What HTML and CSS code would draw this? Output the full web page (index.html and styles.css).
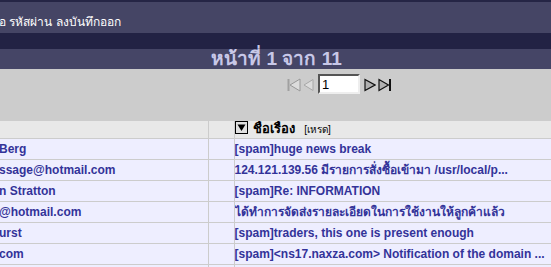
FILE: index.html
```html
<!DOCTYPE html>
<html lang="th">
<head>
  <meta charset="UTF-8">
  <title>กล่องจดหมาย</title>
  <link rel="stylesheet" href="styles.css">
</head>
<body>
  <!-- top menu -->
  <div class="topbar">
    <div class="menu">อ รหัสผ่าน ลงบันทึกออก</div>
  </div>
  <div class="band"></div>

  <div class="title">หน้าที่ 1 จาก 11</div>

  <!-- pager -->
  <div class="toolbar">
    <div class="pager">
      <svg class="pg" width="14" height="14" viewBox="0 0 14 14">
        <rect x="0.5" y="1" width="2" height="12" fill="#a0a0a0"/>
        <polygon points="13,1 13,13 3,7" fill="#dcdcdc" stroke="#989898" stroke-width="1"/>
      </svg>
      <svg class="pg" width="11" height="14" viewBox="0 0 11 14">
        <polygon points="10,1.5 10,12.5 1,7" fill="#dcdcdc" stroke="#a8a8a8" stroke-width="1"/>
      </svg>
      <input class="pageno" type="text" value="1">
      <svg class="pg" width="12" height="14" viewBox="0 0 12 14">
        <polygon points="1,1.5 1,12.5 11,7" fill="#b0b0b0" stroke="#111" stroke-width="1.2"/>
      </svg>
      <svg class="pg" width="14" height="14" viewBox="0 0 14 14">
        <polygon points="1,1.5 1,12.5 10.5,7" fill="#b0b0b0" stroke="#111" stroke-width="1.2"/>
        <rect x="11" y="1" width="2" height="12" fill="#111"/>
      </svg>
    </div>
  </div>

  <table class="list">
    <tr class="head">
      <td class="from"></td>
      <td class="flag"></td>
      <td class="subj">
        <span class="sort"><svg width="13" height="13" viewBox="0 0 13 13"><rect x="0.5" y="0.5" width="12" height="12" fill="#e0e0e0" stroke="#000"/><polygon points="2.5,3.5 10.5,3.5 6.5,10" fill="#000"/></svg></span>
        <b>ชื่อเรื่อง</b> <small>[เหรด]</small>
      </td>
    </tr>
    <tr>
      <td class="from"><a>Berg</a></td>
      <td class="flag"></td>
      <td class="subj"><a>[spam]huge news break</a></td>
    </tr>
    <tr>
      <td class="from"><a>ssage@hotmail.com</a></td>
      <td class="flag"></td>
      <td class="subj"><a>124.121.139.56 มีรายการสั่งซื้อเข้ามา /usr/local/p...</a></td>
    </tr>
    <tr>
      <td class="from"><a>n Stratton</a></td>
      <td class="flag"></td>
      <td class="subj"><a>[spam]Re: INFORMATION</a></td>
    </tr>
    <tr>
      <td class="from"><a>@hotmail.com</a></td>
      <td class="flag"></td>
      <td class="subj"><a>ได้ทำการจัดส่งรายละเอียดในการใช้งานให้ลูกค้าแล้ว</a></td>
    </tr>
    <tr>
      <td class="from"><a>urst</a></td>
      <td class="flag"></td>
      <td class="subj"><a>[spam]traders, this one is present enough</a></td>
    </tr>
    <tr>
      <td class="from"><a>com</a></td>
      <td class="flag"></td>
      <td class="subj"><a>[spam]&lt;ns17.naxza.com&gt; Notification of the domain ...</a></td>
    </tr>
    <tr>
      <td class="from"></td>
      <td class="flag"></td>
      <td class="subj"></td>
    </tr>
  </table>
</body>
</html>
```

FILE: styles.css
```css
/* base */
* { margin:0; padding:0; box-sizing:border-box; }
html, body { overflow:hidden; }
body {
  width:551px; height:267px;
  background:#eeeeff;
  font-family:"Liberation Sans", Tahoma, sans-serif;
  font-size:12px;
}

/* top menu */
.topbar {
  height:33px;
  border-top:2px solid #252545;
  background:#454565;
  padding-top:13px;
}
.menu {
  color:#fff;
  font-size:12px;
  line-height:14px;
  margin-left:-1px;
  white-space:nowrap;
}
.band { height:16px; background:#222244; }

/* page title */
.title {
  height:20px;
  background:#454566;
  color:#c8c8e8;
  font-weight:bold;
  font-size:19px;
  line-height:20px;
  text-align:center;
  padding-left:2px;
  white-space:nowrap;
}

/* pager */
.toolbar {
  height:52px;
  background:#cccccc;
  padding:5px 0 0 287px;
}
.pager { display:flex; align-items:center; height:20px; }
.pg { display:block; margin-top:2px; }
.pg + .pg { margin-left:2px; }
.pageno {
  width:42px; height:20px;
  margin:0 4px 0 4px;
  border:2px solid;
  border-color:#555 #eee #eee #555;
  background:#fff;
  font-family:"Liberation Sans", sans-serif;
  font-size:13px;
  padding:0 2px;
}

/* message list */
.list {
  border-collapse:collapse;
  width:100%;
  table-layout:fixed;
}
.list td {
  height:21px;
  line-height:14px;
  border-bottom:1px solid #cccccc;
  border-right:1px solid #cccccc;
  white-space:nowrap;
  overflow:hidden;
  vertical-align:middle;
}
.list tr.head td { height:17px; background:#e8e8e8; }
.list td.from { width:208px; }
.list td.flag { width:26px; }
.list td.subj { border-right:none; }
.list a {
  color:#333399;
  font-weight:bold;
  font-size:12px;
}
.list td.from a { margin-left:-1px; }
.sort { display:inline-block; vertical-align:-1px; }
.sort svg { display:block; }
.head b { color:#000; font-size:13px; margin-left:2px; }
.head small { font-size:10px; margin-left:6px; }
```
